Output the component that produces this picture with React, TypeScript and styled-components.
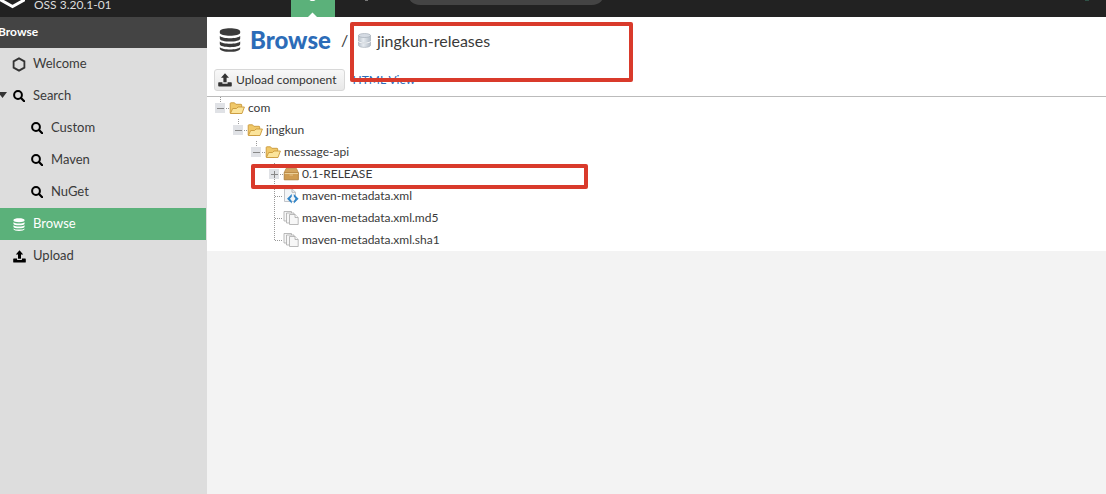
import React from "react";
import styled, { createGlobalStyle } from "styled-components";

const GlobalStyle = createGlobalStyle`
  * { box-sizing: border-box; }
  body {
    margin: 0;
    background: #f3f3f3;
    color: #3a3a3a;
    font: 13px/16px Lato, "Liberation Sans", sans-serif;
  }
  a { color: inherit; text-decoration: none; }
  svg { display: block; flex: none; }
`;

const Page = styled.div`
  display: flex;
  flex-direction: column;
  min-height: 100vh;
`;

const Header = styled.header`
  display: flex;
  align-items: flex-end;
  height: 17px;
  overflow: hidden;
  background: #222;
  color: #ddd;
`;

const Brand = styled.div`
  display: flex;
  align-items: flex-end;
  flex: none;
  gap: 9px;
  width: 291px;
  height: 17px;
`;

const Version = styled.span`
  padding-bottom: 4px;
  font-size: 12px;
`;

const ModeButton = styled.button<{ $active?: boolean }>`
  flex: none;
  width: ${(p) => (p.$active ? 44 : 62)}px;
  height: 17px;
  padding: 0;
  border: 0;
  background: ${(p) => (p.$active ? "#5bb17a" : "transparent")};
  svg { margin: 0 auto; }
`;

const SearchBox = styled.label`
  display: flex;
  align-items: center;
  flex: none;
  gap: 4px;
  width: 198px;
  height: 26px;
  margin: 0 auto 12px 10px;
  padding: 0 8px;
  border-radius: 13px;
  background: #444;
  color: #bbb;
`;

const SearchInput = styled.input`
  width: 100%;
  min-width: 0;
  padding: 0;
  border: 0;
  outline: 0;
  background: transparent;
  color: #ddd;
  font: inherit;
  &::placeholder { color: #bbb; }
`;

const Status = styled.span`
  width: 4px;
  height: 17px;
  margin-right: 17px;
  border-top: 1px solid #2f5146;
`;

const Body = styled.div`
  display: flex;
  flex: 1;
`;

const Sidebar = styled.nav`
  flex: none;
  width: 207px;
  background: #ddd;
`;

const SidebarTitle = styled.h2`
  margin: 0;
  height: 31px;
  background: #444;
  color: #fff;
  font-size: 12px;
  font-weight: 700;
  line-height: 30px;
  text-indent: -2px;
`;

const NavItem = styled.a<{ $nested?: boolean; $active?: boolean }>`
  display: flex;
  align-items: center;
  gap: 6px;
  height: 32px;
  margin-right: 1px;
  padding: 0 0 2px ${(p) => (p.$nested ? 18 : 0)}px;
  background: ${(p) => (p.$active ? "#5bb17a" : "transparent")};
  color: ${(p) => (p.$active ? "#fff" : "#3a3a3a")};
`;

const NavArrow = styled.span`
  flex: none;
  width: 5px;
`;

const NavIcon = styled.span<{ $active?: boolean }>`
  display: flex;
  justify-content: center;
  width: 16px;
  padding-top: 2px;
  color: ${(p) => (p.$active ? "#fff" : "#000")};
`;

const Content = styled.main`
  flex: 1;
  min-width: 0;
`;

const Panel = styled.section`
  position: relative;
  background: #fff;
`;

const Breadcrumb = styled.div`
  display: flex;
  align-items: center;
  height: 46px;
  padding-left: 12px;
`;

const Title = styled.h1`
  margin: 0 10px 0 9px;
  color: #2c6cb8;
  font-size: 24px;
  line-height: 32px;
  font-weight: 900;
`;

const Slash = styled.span`
  width: 17px;
  font-size: 16px;
`;

const RepoName = styled.span`
  padding: 2px 0 0 6px;
  font-size: 16px;
  line-height: 20px;
`;

const Toolbar = styled.div`
  display: flex;
  align-items: center;
  gap: 8px;
  height: 34px;
  padding-left: 7px;
  border-bottom: 1px solid #bbb;
  font-size: 12px;
`;

const UploadButton = styled.button`
  display: flex;
  align-items: center;
  gap: 4px;
  height: 22px;
  padding: 0 7px 0 3px;
  border: 1px solid #d8d8d8;
  border-radius: 3px;
  background: linear-gradient(#f8f8f8, #e8e8e8);
  color: #333;
  font: inherit;
`;

const HtmlLink = styled.a`
  && { color: #2c6cb8; }
`;

const Tree = styled.ul`
  margin: 0;
  padding: 0 0 0 5px;
  list-style: none;
`;

const TreeRow = styled.li<{ $level: number }>`
  display: flex;
  align-items: center;
  height: 22px;
  padding-left: ${(p) => p.$level * 18}px;
  font-size: 12px;
`;

const TreeLabel = styled.span`
  padding-left: 3px;
`;

const Highlight = styled.div<{ $area: "repo" | "release" }>`
  position: absolute;
  pointer-events: none;
  border: 4px solid #d93a2b;
  border-radius: 2px;
  ${(p) =>
    p.$area === "repo"
      ? "left: 143px; top: 5px; width: 283px; height: 60px;"
      : "left: 44px; top: 147px; width: 337px; height: 25px;"}
`;

const DatabaseIcon = ({ width, height }: { width: number; height: number }) => (
  <svg width={width} height={height} viewBox="0 0 22 24" preserveAspectRatio="none" fill="currentColor">
    <path d="M.8 3.600C.8-.8 21.200-.8 21.200 3.600v1.200c0 4-20.400 4-20.400 0z" />
    <path d="M.8 8c3 3 17.400 3 20.400 0v2.400c0 4.200-20.400 4.200-20.400 0z" />
    <path d="M.8 13.600c3 3 17.400 3 20.400 0V16c0 4.200-20.400 4.200-20.400 0z" />
    <path d="M.8 19.200c3 3 17.400 3 20.400 0v1.200c0 4.600-20.400 4.600-20.400 0z" />
  </svg>
);

const SearchIcon = () => (
  <svg width="12" height="12" viewBox="0 0 12 12" fill="none" stroke="currentColor">
    <circle cx="5" cy="5" r="3.9" strokeWidth="2" />
    <path d="M8 8l3.2 3.2" strokeWidth="2.2" strokeLinecap="round" />
  </svg>
);

const HexIcon = () => (
  <svg width="14" height="15" viewBox="0 0 14 15" fill="none" stroke="#333" strokeWidth="1.8">
    <path d="M7 1.4l5.4 3v6.2L7 13.6l-5.4-3V4.400z" />
  </svg>
);

const UploadIcon = ({ size }: { size: number }) => (
  <svg width={size} height={size} viewBox="0 0 13 13" fill="currentColor">
    <path d="M6.500 .3l3.700 4.200H8v4.200H5V4.500H2.800z" />
    <path d="M.8 8.600h3.300v1.300h4.800V8.600h3.300q.6 0 .6.6v2.700q0 .7-.7.7H.9q-.7 0-.7-.7V9.200q0-.6.6-.6z" />
  </svg>
);

const RepoIcon = () => (
  <svg width="13" height="15" viewBox="0 0 13 15" stroke="#a9b1bc" strokeWidth=".7">
    <defs>
      <linearGradient id="metal">
        <stop offset="0" stopColor="#b9c1cb" />
        <stop offset=".4" stopColor="#e6ebf0" />
        <stop offset="1" stopColor="#b3bcc7" />
      </linearGradient>
    </defs>
    <path d="M.5 9c1 2 11 2 12 0v3.500c-1 2.500-11 2.500-12 0z" fill="url(#metal)" />
    <path d="M.5 2.500c1 2 11 2 12 0v5.500c-1 2.200-11 2.200-12 0z" fill="url(#metal)" />
    <path d="M.7 8.600c1.500 2 10.100 2 11.600 0" stroke="#f8fafc" strokeWidth="1" fill="none" />
    <ellipse cx="6.500" cy="2.500" rx="6" ry="2" fill="#d5dbe3" />
  </svg>
);

type Elbow = "minus" | "plus" | "tee" | "end";

const ElbowIcon = ({ kind }: { kind: Elbow }) => {
  const box = kind === "minus" || kind === "plus";
  return (
    <svg width="17" height="22" viewBox="0 0 17 22" fill="none">
      <path
        d={kind === "minus" ? "M8.500 0v7" : kind === "end" ? "M8.500 0v12" : "M8.500 0v22"}
        stroke="#999"
        strokeDasharray="1 1"
      />
      <path d={box ? "M14 11.500h3" : "M9 11.500h7"} stroke="#999" strokeDasharray="1 1" />
      {box && <path d="M3 6h10v10H3z" fill="#e0e2e6" />}
      {box && <path d={kind === "plus" ? "M5 11.500h7M8.500 8v7" : "M5 11.500h7"} stroke="#888" />}
    </svg>
  );
};

const FolderIcon = () => (
  <svg width="16" height="16" viewBox="0 0 16 16" stroke="#c9983a" strokeWidth=".9" strokeLinejoin="round">
    <path d="M1.200 13V3.500q0-.7.7-.7h3.600l1.300 1.500H12q.7 0 .7.7V7L9 13.500z" fill="#f0c868" />
    <path d="M1.400 13.500l2.300-5h3.800L9 7h6.400L13 13.500z" fill="#fbe49b" />
  </svg>
);

const PackageIcon = () => (
  <svg width="16" height="16" viewBox="0 0 16 16">
    <path d="M3 2.500h10.500L15.500 7H1z" fill="#d3a560" stroke="#b48545" strokeWidth=".7" />
    <path d="M1.200 7h14.200v6.800H1.200z" fill="#cf9c52" stroke="#a97835" strokeWidth=".8" />
    <path d="M1.600 7.500h13.400" stroke="#ecd09a" />
    <path d="M6.500 9h3.500" stroke="#e3c08a" />
  </svg>
);

const XmlIcon = () => (
  <svg width="16" height="16" viewBox="0 0 16 16" fill="none">
    <path d="M1.500 .8h7.500l3.500 3.500V13.500h-11z" fill="#f3f5f7" stroke="#b5b8bc" strokeWidth=".8" />
    <path d="M9 .8v3.500h3.500" stroke="#aaa" strokeWidth=".8" />
    <path d="M8.800 6v2.500L7 10.700l1.800 2.200v2.500L4 10.700zM10.800 6v2.500l1.800 2.200-1.800 2.200v2.500l4.800-4.700z" fill="#3286c9" />
  </svg>
);

const FilesIcon = () => (
  <svg width="16" height="16" viewBox="0 0 16 16" fill="#f7f7f7" stroke="#aaa" strokeWidth=".8">
    <path d="M1 1.500h7.500V11H1z" />
    <path d="M3.500 3H11v10H3.500z" />
    <path d="M6.500 4.500h5.500l3.200 3v7H6.500z" />
    <path d="M12 4.500v3h3.200" />
  </svg>
);

const navItems = [
  { label: "Welcome", icon: <HexIcon /> },
  { label: "Search", icon: <SearchIcon />, expanded: true },
  { label: "Custom", icon: <SearchIcon />, nested: true },
  { label: "Maven", icon: <SearchIcon />, nested: true },
  { label: "NuGet", icon: <SearchIcon />, nested: true },
  { label: "Browse", icon: <DatabaseIcon width={12} height={13} />, active: true },
  { label: "Upload", icon: <UploadIcon size={13} /> },
];

const treeRows: { label: string; level: number; elbow: Elbow; icon: React.ReactNode }[] = [
  { label: "com", level: 0, elbow: "minus", icon: <FolderIcon /> },
  { label: "jingkun", level: 1, elbow: "minus", icon: <FolderIcon /> },
  { label: "message-api", level: 2, elbow: "minus", icon: <FolderIcon /> },
  { label: "0.1-RELEASE", level: 3, elbow: "plus", icon: <PackageIcon /> },
  { label: "maven-metadata.xml", level: 3, elbow: "tee", icon: <XmlIcon /> },
  { label: "maven-metadata.xml.md5", level: 3, elbow: "tee", icon: <FilesIcon /> },
  { label: "maven-metadata.xml.sha1", level: 3, elbow: "end", icon: <FilesIcon /> },
];

export default function App() {
  return (
    <Page>
      <GlobalStyle />
      <Header>
        <Brand>
          <svg width="25" height="17" viewBox="0 0 25 17" fill="none" stroke="#fff" strokeWidth="3">
            <path d="M-1 -1L12.500 6.500L26 -1" />
          </svg>
          <Version>OSS 3.20.1-01</Version>
        </Brand>
        <ModeButton $active aria-label="Browse mode">
          <svg width="44" height="17" viewBox="0 0 44 17" fill="#fff">
            <path d="M18.500 0h6l-1.500 1h-3z" />
            <path d="M17 17l4.500-4.500L26 17z" />
          </svg>
        </ModeButton>
        <ModeButton aria-label="Administration">
          <svg width="62" height="17" viewBox="0 0 62 17">
            <path d="M30 0h3v1h-3z" fill="#777" />
          </svg>
        </ModeButton>
        <SearchBox>
          <SearchIcon />
          <SearchInput placeholder="Search components" aria-label="Search components" />
        </SearchBox>
        <Status />
      </Header>
      <Body>
        <Sidebar>
          <SidebarTitle>Browse</SidebarTitle>
          {navItems.map((item) => (
            <NavItem key={item.label} href="#" $nested={item.nested} $active={item.active}>
              <NavArrow>
                {item.expanded && (
                  <svg width="7" height="6" viewBox="0 0 7 6" fill="#333">
                    <path d="M-2 0h9L2.500 6z" />
                  </svg>
                )}
              </NavArrow>
              <NavIcon $active={item.active}>{item.icon}</NavIcon>
              {item.label}
            </NavItem>
          ))}
        </Sidebar>
        <Content>
          <Panel>
            <Breadcrumb>
              <DatabaseIcon width={22} height={24} />
              <Title>Browse</Title>
              <Slash>/</Slash>
              <RepoIcon />
              <RepoName>jingkun-releases</RepoName>
            </Breadcrumb>
            <Toolbar>
              <UploadButton>
                <UploadIcon size={14} />
                Upload component
              </UploadButton>
              <HtmlLink href="#">HTML View</HtmlLink>
            </Toolbar>
            <Tree>
              {treeRows.map((row) => (
                <TreeRow key={row.label} $level={row.level}>
                  <ElbowIcon kind={row.elbow} />
                  {row.icon}
                  <TreeLabel>{row.label}</TreeLabel>
                </TreeRow>
              ))}
            </Tree>
            <Highlight $area="repo" />
            <Highlight $area="release" />
          </Panel>
        </Content>
      </Body>
    </Page>
  );
}
